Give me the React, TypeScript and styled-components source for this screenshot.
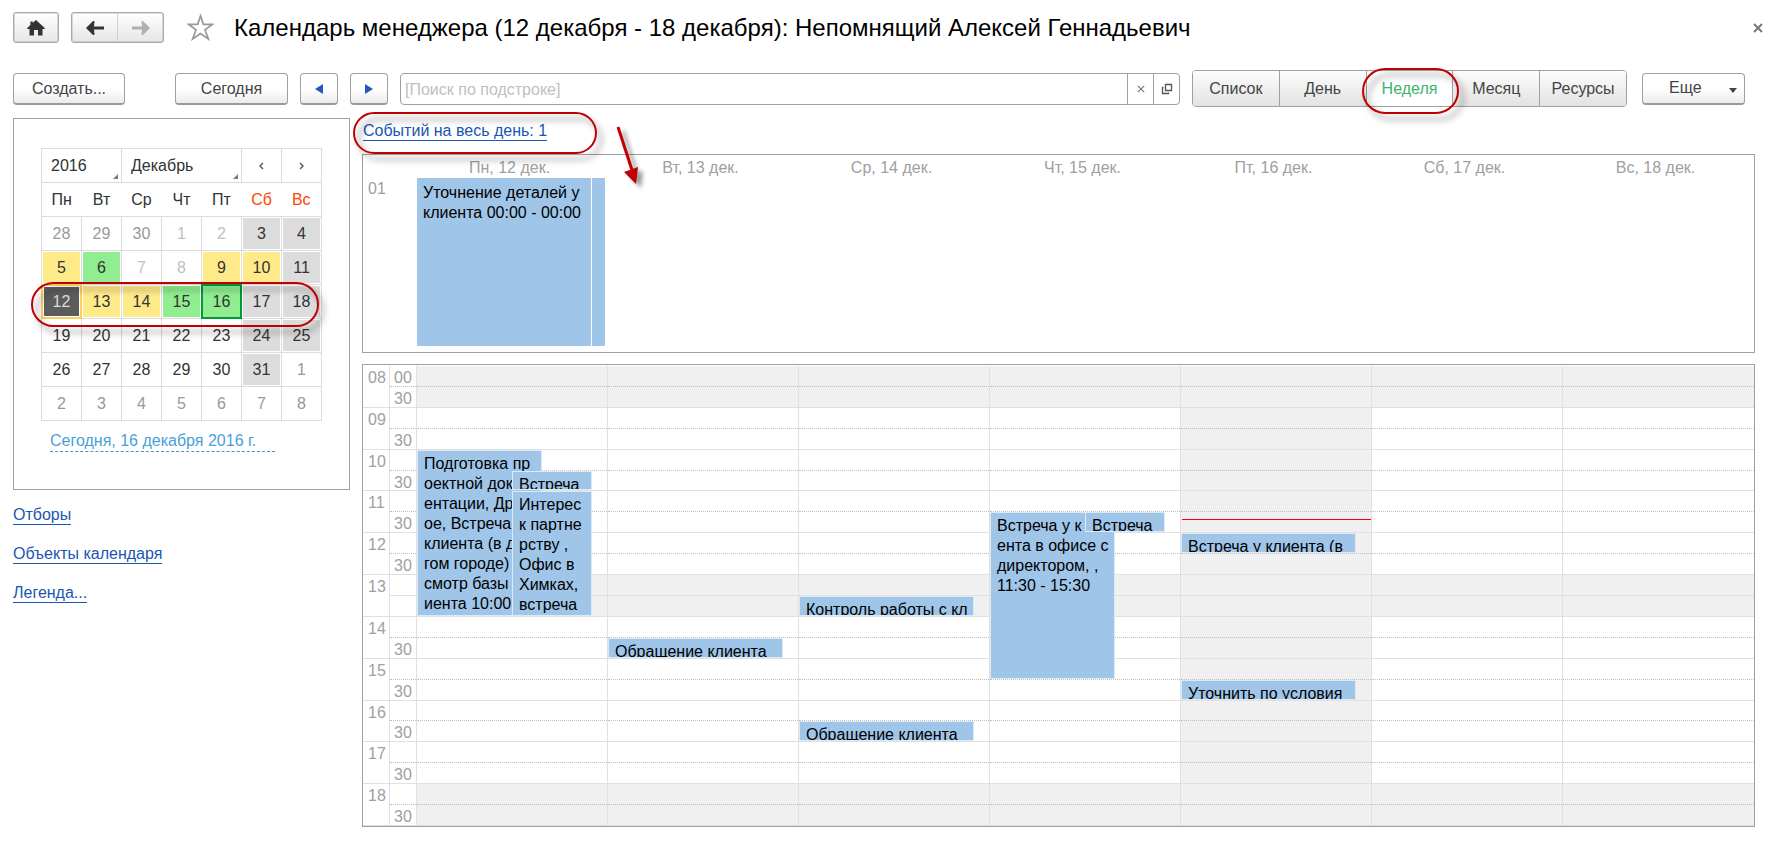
import React from 'react';
import styled, { createGlobalStyle, css } from 'styled-components';

const GlobalStyle = createGlobalStyle`
  *, *::before, *::after { box-sizing: border-box; }
  body { margin: 0; background: #fff; }
  body, button, input, select {
    font-family: "Liberation Sans", Arial, sans-serif;
    font-size: 16px;
    line-height: 20px;
    color: #333;
  }
  button, select { cursor: pointer; }
`;

const line = '#a0a0a0';

const Page = styled.div`
  display: flex;
  flex-direction: column;
  padding: 12px 0 15px;
`;

const Header = styled.header`
  display: flex;
  align-items: center;
  height: 31px;
  padding: 0 7px 0 13px;
`;

const raised = css`
  border: 1px solid ${line};
  border-bottom: 2px solid #9a9a9a;
  border-radius: 4px;
  background: linear-gradient(#fff 50%, #ececec);
`;

const framed = css`
  border: 1px solid #a8a8a8;
  border-radius: 3px;
  background: linear-gradient(#fff, #e6e6e6);
  box-shadow: inset 0 0 0 1px rgba(160, 160, 160, 0.35);
`;

const IconButton = styled.button`
  ${framed}
  display: flex;
  align-items: center;
  justify-content: center;
  width: 46px;
  height: 31px;
  padding: 0;
`;

const NavGroup = styled.div`
  ${framed}
  display: flex;
  width: 93px;
  height: 31px;
  margin-left: 12px;
`;

const NavButton = styled.button`
  flex: 1;
  display: flex;
  align-items: center;
  justify-content: center;
  padding: 0;
  border: 0;
  background: none;
  & + & { border-left: 1px solid #d0d0d0; }
`;

const BareButton = styled.button`
  display: flex;
  padding: 0;
  border: 0;
  background: none;
`;

const StarButton = styled(BareButton)`
  margin-left: 23px;
`;

const Title = styled.h1`
  flex: 1;
  margin: 0 0 0 20px;
  font-size: 24px;
  line-height: 28px;
  font-weight: 400;
  color: #000;
  white-space: nowrap;
`;

const Toolbar = styled.div`
  display: flex;
  align-items: center;
  gap: 12px;
  height: 37px;
  margin-top: 27px;
  padding: 0 25px 0 13px;
`;

const Button = styled.button<{ $width: number }>`
  ${raised}
  display: flex;
  align-items: center;
  justify-content: center;
  width: ${(p) => p.$width}px;
  height: 32px;
  padding: 1px 0 0;
  color: #444;
`;

const CreateSlot = styled.div`
  margin-right: 38px;
`;

const Search = styled.div`
  flex: 1;
  display: flex;
  height: 32px;
  border: 1px solid ${line};
  border-radius: 4px;
`;

const SearchInput = styled.input`
  flex: 1;
  min-width: 0;
  padding: 2px 4px 0;
  border: 0;
  background: none;
  outline: none;
  &::placeholder { color: #c0c0c0; opacity: 1; }
`;

const SearchButton = styled.button`
  display: flex;
  align-items: center;
  justify-content: center;
  width: 26px;
  padding: 0;
  border: 0;
  border-left: 1px solid ${line};
  background: none;
`;

const Segments = styled.div`
  display: flex;
  width: 435px;
  height: 37px;
  border: 1px solid ${line};
  border-radius: 4px;
`;

const Segment = styled.button<{ $active?: boolean }>`
  position: relative;
  flex: 1;
  padding: 0;
  border: 0;
  background: ${(p) => (p.$active ? '#fff' : 'linear-gradient(#fdfdfd, #e2e2e2)')};
  color: ${(p) => (p.$active ? '#3cb371' : '#444')};
  & + & { border-left: 1px solid ${line}; }
  &:first-child { border-radius: 3px 0 0 3px; }
  &:last-child { border-radius: 0 3px 3px 0; }
`;

const MoreButton = styled(Button)`
  justify-content: space-between;
  padding: 0 7px 0 26px;
  margin-left: 3px;
`;

const Caret = styled.svg`
  margin-top: 5px;
`;

const Mark = styled.span<{ $top: number; $left: number; $width: number; $height: number }>`
  position: absolute;
  z-index: 5;
  top: ${(p) => p.$top}px;
  left: ${(p) => p.$left}px;
  width: ${(p) => p.$width}px;
  height: ${(p) => p.$height}px;
  border: 2px solid #c00000;
  border-radius: 26px;
  filter: drop-shadow(5px 6px 3px rgba(0, 0, 0, 0.45));
  pointer-events: none;
`;

const Body = styled.div`
  display: flex;
  align-items: flex-start;
  gap: 12px;
  margin-top: 11px;
  padding: 0 15px 0 13px;
`;

const Sidebar = styled.aside`
  flex: none;
  width: 337px;
`;

const DatePanel = styled.section`
  height: 372px;
  padding: 29px 27px 0;
  border: 1px solid ${line};
`;

const TableHolder = styled.div`
  position: relative;
  width: 281px;
`;

const MonthTable = styled.table`
  width: 281px;
  table-layout: fixed;
  border-collapse: collapse;
  text-align: center;
`;

const HeadCell = styled.td`
  position: relative;
  height: 34px;
  padding: 0;
  border: 1px solid #dcdcdc;
`;

const PickSelect = styled.select`
  appearance: none;
  display: block;
  width: 100%;
  height: 32px;
  padding: 0 9px;
  border: 0;
  background: none;
  outline: none;
`;

const Corner = styled.span`
  position: absolute;
  right: 3px;
  bottom: 3px;
  width: 0;
  height: 0;
  border-left: 5px solid transparent;
  border-bottom: 5px solid #777;
  pointer-events: none;
`;

const StepButton = styled.button`
  display: flex;
  align-items: center;
  justify-content: center;
  width: 100%;
  height: 32px;
  padding: 0;
  border: 0;
  background: none;
`;

const WeekDay = styled.th<{ $weekend: boolean }>`
  height: 34px;
  padding: 0;
  border: solid #dcdcdc;
  border-width: 1px 0;
  font-weight: 400;
  color: ${(p) => (p.$weekend ? '#ff4500' : '#333')};
  &:first-child { border-left-width: 1px; }
  &:last-child { border-right-width: 1px; }
`;

const DayCell = styled.td`
  height: 34px;
  padding: 1px;
  border: 1px solid #dcdcdc;
`;

type DayKind = 'out' | 'faint' | 'plain' | 'off' | 'yellow' | 'green' | 'selected' | 'today';

const dayFill: Record<DayKind, string> = {
  out: 'transparent',
  faint: 'transparent',
  plain: 'transparent',
  off: '#dcdcdc',
  yellow: '#ffea8a',
  green: '#90ee90',
  selected: '#5c5c5c',
  today: '#90ee90',
};

const dayInk: Record<DayKind, string> = {
  out: '#999',
  faint: '#c0c0c0',
  plain: '#333',
  off: '#333',
  yellow: '#333',
  green: '#333',
  selected: '#ddd',
  today: '#333',
};

const DayButton = styled.button<{ $kind: DayKind }>`
  position: relative;
  display: block;
  width: 100%;
  height: 31px;
  padding: 0;
  border: 0;
  background: ${(p) => dayFill[p.$kind]};
  color: ${(p) => dayInk[p.$kind]};
  ${(p) => p.$kind === 'selected' && 'box-shadow: 0 0 0 2px #ffcf5c, inset 0 0 0 1px #fff;'}
  ${(p) => p.$kind === 'today' && 'box-shadow: 0 0 0 2px #009a3c;'}
`;

const TodayLink = styled.a`
  display: block;
  width: 225px;
  margin: 10px 0 0 9px;
  border-bottom: 1px dashed #3c96d2;
  color: #4a9fd8;
  text-decoration: none;
`;

const SideLinks = styled.nav`
  display: flex;
  flex-direction: column;
  align-items: flex-start;
  gap: 19px;
  margin-top: 15px;
`;

const Link = styled.a`
  color: #1a56b0;
  text-decoration: none;
  border-bottom: 1px solid #1a56b0;
  line-height: 19px;
`;

const Main = styled.main`
  flex: 1;
  min-width: 0;
`;

const EventsBar = styled.div`
  position: relative;
  display: flex;
  align-items: flex-start;
  height: 36px;
  padding: 3px 1px 0;
`;

const ArrowDrawing = styled.svg`
  position: absolute;
  z-index: 5;
  top: 6px;
  left: 250px;
  filter: drop-shadow(5px 4px 2px rgba(0, 0, 0, 0.4));
  pointer-events: none;
`;

const AllDayPanel = styled.section`
  display: grid;
  grid-template-columns: 54px repeat(7, 1fr);
  grid-template-rows: 23px 1fr;
  height: 199px;
  padding-bottom: 6px;
  border: 1px solid ${line};
`;

const DayTitle = styled.div`
  padding: 3px 6px 0 0;
  text-align: center;
  color: #a0a0a0;
`;

const RowLabel = styled.div`
  padding: 1px 5px 0;
  color: #a0a0a0;
`;

const AllDayEvents = styled.div`
  display: flex;
  gap: 1px;
`;

const AllDayEvent = styled.div<{ $width?: number }>`
  width: ${(p) => (p.$width ? `${p.$width}px` : '174px')};
  padding: ${(p) => (p.$width ? '0' : '5px 6px')};
  background: #9fc5e8;
  color: #000;
`;

const TimePanel = styled.section`
  display: grid;
  grid-template-columns: 27px 27px repeat(7, 1fr);
  height: 463px;
  margin-top: 11px;
  padding-top: 1px;
  border: 1px solid ${line};
`;

const TimeColumn = styled.div<{ $today?: boolean }>`
  position: relative;
  display: grid;
  grid-template-rows: repeat(22, 1fr);
  min-width: 0;
  min-height: 0;
  border-right: 1px solid #e0e0e0;
  background: ${(p) => (p.$today ? '#f0f0f0' : '#fff')};
  &:last-child { border-right: 0; }
`;

const Slot = styled.div<{ $half?: boolean; $off?: boolean; $solid?: boolean }>`
  min-height: 0;
  border-bottom: 1px ${(p) => (p.$half && !p.$solid ? 'dotted #c0c0c0' : 'solid #e0e0e0')};
  background: ${(p) => (p.$off ? '#f0f0f0' : 'transparent')};
`;

const HourSlot = styled.div`
  grid-row: span 2;
  min-height: 0;
  padding: 2px 4px 0 5px;
  border-bottom: 1px solid #e0e0e0;
  color: #a0a0a0;
`;

const MinuteSlot = styled(Slot)`
  padding: 2px 4px 0 4px;
  line-height: 19px;
  color: #a0a0a0;
`;

const EventBox = styled.div`
  position: absolute;
  overflow: hidden;
  padding: 3px 0 0 6px;
  border: 1px solid #dceaf6;
  background: #9fc5e8;
  color: #000;
  white-space: pre;
`;

const NowLine = styled.div`
  position: absolute;
  left: 1px;
  right: 0;
  height: 1px;
  background: #f00;
`;

const HomeIcon = () => (
  <svg width="18" height="16" viewBox="0 0 18 16" aria-hidden="true">
    <path d="M9 0l9 8.200-.6.8h-1.900v6.500h-4.500V10H7v5.500H2.500V9H.6L0 8.200 3.400 5V1.500h2.300V3z" fill="#333" />
  </svg>
);

const ArrowIcon = ({ right, color }: { right?: boolean; color: string }) => (
  <svg width="18" height="14" viewBox="0 0 18 14" aria-hidden="true">
    <path
      d={right ? 'M0 5.500h10L9.500 0H11l7 7-7 7H9.500L10 8.500H0z' : 'M18 5.500H8L8.500 0H7L0 7l7 7h1.500L8 8.500h10z'}
      fill={color}
    />
  </svg>
);

const StarIcon = () => (
  <svg width="27" height="27" viewBox="0 0 27 27" aria-hidden="true">
    <path
      d="M13.500 1.800 16.300 10.300 25.300 10.400 18 15.900 21.400 25 13.500 19.600 5.600 25 9 15.900 1.700 10.400 10.700 10.300z"
      fill="none"
      stroke="#999"
      strokeWidth="1.700"
    />
  </svg>
);

const Triangle = ({ right }: { right?: boolean }) => (
  <svg width="8" height="10" viewBox="0 0 8 10" aria-hidden="true">
    <path d={right ? 'M0 0 8 5 0 10z' : 'M8 0 0 5l8 5z'} fill="#1e5bb8" />
  </svg>
);

const CrossIcon = ({ size, width }: { size: number; width: number }) => (
  <svg width={size} height={size} viewBox="0 0 10 10" aria-hidden="true">
    <path d="M1 1l8 8M9 1l-8 8" stroke="#777" strokeWidth={width} fill="none" />
  </svg>
);

const OpenIcon = () => (
  <svg width="12" height="12" viewBox="0 0 12 12" aria-hidden="true">
    <path d="M4.500 1.500h6v6h-6zM2.500 4.500h-1v6h6v-1" stroke="#555" strokeWidth="1.300" fill="none" />
  </svg>
);

const Chevron = ({ right }: { right?: boolean }) => (
  <svg width="5" height="8" viewBox="0 0 5 8" aria-hidden="true">
    <path d={right ? 'M1 1l3 3-3 3' : 'M4 1L1 4l3 3'} stroke="#555" strokeWidth="1.400" fill="none" />
  </svg>
);

const weekDays = ['Пн', 'Вт', 'Ср', 'Чт', 'Пт', 'Сб', 'Вс'];

const weeks: [number, DayKind][][] = [
  [[28, 'out'], [29, 'out'], [30, 'out'], [1, 'faint'], [2, 'faint'], [3, 'off'], [4, 'off']],
  [[5, 'yellow'], [6, 'green'], [7, 'faint'], [8, 'faint'], [9, 'yellow'], [10, 'yellow'], [11, 'off']],
  [[12, 'selected'], [13, 'yellow'], [14, 'yellow'], [15, 'green'], [16, 'today'], [17, 'off'], [18, 'off']],
  [[19, 'plain'], [20, 'plain'], [21, 'plain'], [22, 'plain'], [23, 'plain'], [24, 'off'], [25, 'off']],
  [[26, 'plain'], [27, 'plain'], [28, 'plain'], [29, 'plain'], [30, 'plain'], [31, 'off'], [1, 'out']],
  [[2, 'out'], [3, 'out'], [4, 'out'], [5, 'out'], [6, 'out'], [7, 'out'], [8, 'out']],
];

const hours = [8, 9, 10, 11, 12, 13, 14, 15, 16, 17, 18];
const offHours = [8, 13, 18];
const views = ['Список', 'День', 'Неделя', 'Месяц', 'Ресурсы'];

interface CalEvent {
  day: number;
  from: number;
  to: number;
  left: number;
  width: number;
  text: string;
}

const events: CalEvent[] = [
  {
    day: 0, from: 10, to: 14, left: 0, width: 66,
    text: 'Подготовка пр\nоектной док\nентации, Др\nое, Встреча\nклиента (в д\nгом городе)\nсмотр базы\nиента 10:00',
  },
  { day: 0, from: 10.5, to: 11, left: 50, width: 42, text: 'Встреча' },
  { day: 0, from: 11, to: 14, left: 50, width: 42, text: 'Интерес\nк партне\nрству ,\nОфис в\nХимках,\nвстреча' },
  { day: 1, from: 14.5, to: 15, left: 0, width: 92, text: 'Обращение клиента' },
  { day: 2, from: 13.5, to: 14, left: 0, width: 92, text: 'Контроль работы с кл' },
  { day: 2, from: 16.5, to: 17, left: 0, width: 92, text: 'Обращение клиента' },
  { day: 3, from: 11.5, to: 15.5, left: 0, width: 66, text: 'Встреча у к\nента в офисе с\nдиректором, ,\n11:30 - 15:30' },
  { day: 3, from: 11.5, to: 12, left: 50, width: 42, text: 'Встреча' },
  { day: 4, from: 12, to: 12.5, left: 0, width: 92, text: 'Встреча у клиента (в' },
  { day: 4, from: 15.5, to: 16, left: 0, width: 92, text: 'Уточнить по условия' },
];

const share = (value: number) => `${(value / 11) * 100}%`;

const MonthPicker = () => (
  <TableHolder>
    <MonthTable>
      <thead>
        <tr>
          <HeadCell colSpan={2}>
            <PickSelect aria-label="Год" defaultValue="2016">
              <option>2016</option>
            </PickSelect>
            <Corner />
          </HeadCell>
          <HeadCell colSpan={3}>
            <PickSelect aria-label="Месяц" defaultValue="Декабрь">
              <option>Декабрь</option>
            </PickSelect>
            <Corner />
          </HeadCell>
          <HeadCell><StepButton aria-label="Предыдущий месяц"><Chevron /></StepButton></HeadCell>
          <HeadCell><StepButton aria-label="Следующий месяц"><Chevron right /></StepButton></HeadCell>
        </tr>
        <tr>
          {weekDays.map((name, i) => (
            <WeekDay key={name} scope="col" $weekend={i > 4}>{name}</WeekDay>
          ))}
        </tr>
      </thead>
      <tbody>
        {weeks.map((week, w) => (
          <tr key={w}>
            {week.map(([day, kind], d) => (
              <DayCell key={d}><DayButton $kind={kind}>{day}</DayButton></DayCell>
            ))}
          </tr>
        ))}
      </tbody>
    </MonthTable>
    <Mark $top={134} $left={-10} $width={288} $height={45} />
  </TableHolder>
);

const TimeGrid = () => (
  <TimePanel>
    <TimeColumn>
      {hours.map((h) => (
        <HourSlot key={h}>{String(h).padStart(2, '0')}</HourSlot>
      ))}
    </TimeColumn>
    <TimeColumn>
      {hours.map((h) => (
        <React.Fragment key={h}>
          <MinuteSlot $half $solid={h === 13}>{h === 8 ? '00' : ''}</MinuteSlot>
          <MinuteSlot>{h === 13 ? '' : '30'}</MinuteSlot>
        </React.Fragment>
      ))}
    </TimeColumn>
    {weekDays.map((name, day) => (
      <TimeColumn key={name} $today={day === 4}>
        {hours.map((h) => (
          <React.Fragment key={h}>
            <Slot $half $solid={h === 13} $off={offHours.includes(h)} />
            <Slot $off={offHours.includes(h)} />
          </React.Fragment>
        ))}
        {day === 4 && <NowLine style={{ top: share(3.66) }} />}
        {events.filter((e) => e.day === day).map((e, i) => (
          <EventBox
            key={i}
            style={{
              top: share(e.from - 8),
              height: `calc(${share(e.to - e.from)} - 1px)`,
              left: `${e.left}%`,
              width: `${e.width}%`,
            }}
          >
            {e.text}
          </EventBox>
        ))}
      </TimeColumn>
    ))}
  </TimePanel>
);

export default function App() {
  return (
    <Page>
      <GlobalStyle />
      <Header>
        <IconButton aria-label="Домой"><HomeIcon /></IconButton>
        <NavGroup>
          <NavButton aria-label="Назад"><ArrowIcon color="#333" /></NavButton>
          <NavButton aria-label="Вперед"><ArrowIcon right color="#b0b0b0" /></NavButton>
        </NavGroup>
        <StarButton aria-label="В избранное"><StarIcon /></StarButton>
        <Title>Календарь менеджера (12 декабря - 18 декабря): Непомнящий Алексей Геннадьевич</Title>
        <BareButton aria-label="Закрыть"><CrossIcon size={10} width={2} /></BareButton>
      </Header>

      <Toolbar>
        <CreateSlot><Button $width={112}>Создать...</Button></CreateSlot>
        <Button $width={113}>Сегодня</Button>
        <Button $width={38} aria-label="Предыдущая неделя"><Triangle /></Button>
        <Button $width={38} aria-label="Следующая неделя"><Triangle right /></Button>
        <Search>
          <SearchInput aria-label="Поиск" placeholder="[Поиск по подстроке]" />
          <SearchButton aria-label="Очистить"><CrossIcon size={8} width={1.4} /></SearchButton>
          <SearchButton aria-label="Открыть"><OpenIcon /></SearchButton>
        </Search>
        <Segments>
          {views.map((view) => (
            <Segment key={view} $active={view === 'Неделя'}>
              {view}
              {view === 'Неделя' && <Mark $top={-3} $left={-5} $width={97} $height={46} />}
            </Segment>
          ))}
        </Segments>
        <MoreButton $width={103}>
          Еще
          <Caret width="8" height="5" viewBox="0 0 8 5" aria-hidden="true"><path d="M0 0h8L4 5z" fill="#444" /></Caret>
        </MoreButton>
      </Toolbar>

      <Body>
        <Sidebar>
          <DatePanel>
            <MonthPicker />
            <TodayLink href="#today">Сегодня, 16 декабря 2016 г.</TodayLink>
          </DatePanel>
          <SideLinks>
            <Link href="#filters">Отборы</Link>
            <Link href="#objects">Объекты календаря</Link>
            <Link href="#legend">Легенда...</Link>
          </SideLinks>
        </Sidebar>

        <Main>
          <EventsBar>
            <Link href="#all-day">Событий на весь день: 1</Link>
            <Mark $top={-6} $left={-9} $width={244} $height={42} />
            <ArrowDrawing width="40" height="66" viewBox="0 0 40 66" aria-hidden="true">
              <path d="M6 3 20 46" stroke="#c00000" strokeWidth="3" />
              <path d="M12 48 26 43 24 60z" fill="#c00000" />
            </ArrowDrawing>
          </EventsBar>
          <AllDayPanel>
            <div />
            {weekDays.map((name, i) => (
              <DayTitle key={name}>{`${name}, ${12 + i} дек.`}</DayTitle>
            ))}
            <RowLabel>01</RowLabel>
            <AllDayEvents>
              <AllDayEvent>Уточнение деталей у клиента 00:00 - 00:00</AllDayEvent>
              <AllDayEvent $width={13} />
            </AllDayEvents>
          </AllDayPanel>
          <TimeGrid />
        </Main>
      </Body>
    </Page>
  );
}
